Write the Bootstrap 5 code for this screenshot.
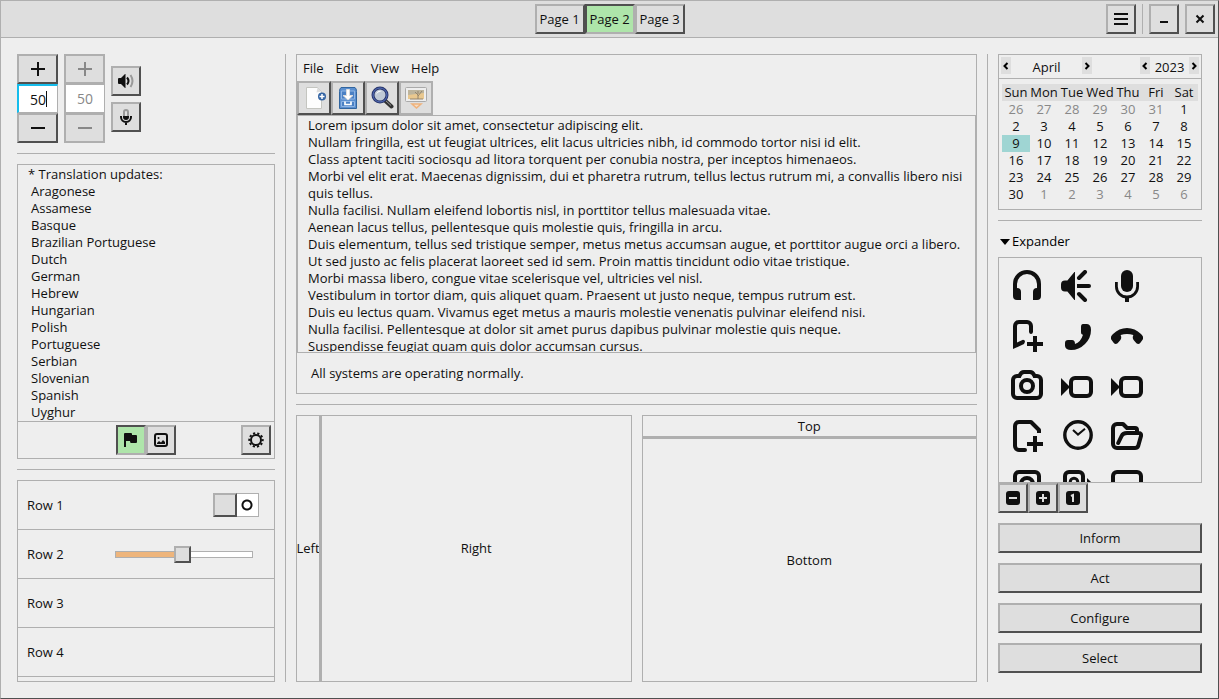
<!DOCTYPE html>
<html lang="en">
<head>
<meta charset="utf-8">
<meta name="viewport" content="width=device-width, initial-scale=1">
<title>Page 2</title>
<link href="https://cdn.jsdelivr.net/npm/bootstrap@5.3.0/dist/css/bootstrap.min.css" rel="stylesheet">
<style>
:root { --lo:#afafaf; --hi:#505050; --face:#dedede; --win:#eee; --ink:#101010; --line:17px; }
body { font:13px/var(--line) "Open Sans","Noto Sans",sans-serif; color:var(--ink); background:var(--win); }
.window { border:1px solid; border-color:var(--lo) var(--hi) var(--hi) var(--lo); }
.titlebar { display:grid; grid-template-columns:1fr auto 1fr; align-items:center; padding:3px; background:var(--face); border-bottom:1px solid var(--lo); }
.title-tools { gap:6px; }
.btn { font-size:13px; line-height:var(--line); padding:0; color:var(--ink); background:var(--face); border:2px solid; border-color:var(--lo) var(--hi) var(--hi) var(--lo); border-radius:0; height:30px; display:inline-flex; align-items:center; justify-content:center; }
.btn.active { background:#aee5aa; color:var(--ink); border-color:var(--hi) var(--lo) var(--lo) var(--hi); }
.btn:disabled { background:var(--face); color:#888; border-color:var(--lo); opacity:1; }
.square { width:30px; }
.page-btn { width:50px; white-space:nowrap; }
.action { width:100%; flex:none; }
.rule-v { width:1px; background:var(--lo); align-self:stretch; flex:none; }
.rule-h { height:1px; background:var(--lo); flex:none; margin:0; border:0; opacity:1; }
.frame { border:1px solid var(--lo); }
.content-area { padding:16px; gap:10px; min-height:0; }
.side-left { width:258px; }
.side-right { width:204px; }
.middle { min-width:0; }
.stack { display:flex; flex-direction:column; gap:10px; min-height:0; }
.spin-group { gap:6px; }
.spin { width:41px; display:flex; flex-direction:column; }
.spin input { width:100%; height:29px; border:2px solid var(--lo); border-width:2px 1px 1px 2px; background:#fff; border-radius:0; text-align:center; padding:0; font-size:14px; outline:0; color:var(--ink); }
.spin input.current { border-color:#15bdec var(--lo) var(--lo) #15bdec; }
.spin input:disabled { color:#888; border-width:1px 1px 1px 2px; }
.caret-box { position:relative; display:flex; }
.caret-box::after { content:""; position:absolute; right:11px; top:7px; width:1px; height:16px; background:var(--ink); }
.updates { height:257px; overflow:hidden; border-bottom:1px solid var(--lo); padding:1px 10px 0; }
.updates li { padding-left:3px; }
.list-tools { display:grid; grid-template-columns:1fr auto 1fr; align-items:center; padding:3px; height:36px; }
.rows { overflow:hidden; flex:1; }
.rows li { height:49px; border-bottom:1px solid var(--lo); padding:0 15px 0 9px; display:flex; align-items:center; justify-content:space-between; }
.toggle { appearance:none; margin:0; width:46px; height:24px; border:1px solid var(--lo); background:radial-gradient(circle at 33px 11px,#fff 3px,var(--ink) 4px,var(--ink) 5px,#fff 6px); position:relative; }
.toggle::before { content:""; position:absolute; left:-1px; top:-1px; width:24px; height:24px; background:var(--face); border:2px solid; border-color:var(--lo) var(--hi) var(--hi) var(--lo); }
.slide { appearance:none; margin:0 6px 0 0; width:138px; height:17px; background:transparent; }
.slide::-webkit-slider-runnable-track { height:7px; border:1px solid var(--lo); background:linear-gradient(90deg,#eeb57c 49%,#fff 49%); }
.slide::-webkit-slider-thumb { appearance:none; width:17px; height:17px; margin-top:-6px; background:var(--face); border:2px solid; border-color:var(--lo) var(--hi) var(--hi) var(--lo); }
.menus { padding:5px 6px 4px; gap:12px; height:26px; }
.menus a { color:var(--ink); text-decoration:none; }
.tool { width:34px; height:34px; }
.editor { display:block; width:100%; height:238px; resize:none; overflow:hidden; border:1px solid var(--lo); background:transparent; padding:1px 8px 1px 10px; color:var(--ink); outline:0; line-height:var(--line); }
.status { height:40px; padding:12px 14px 0; }
.panes { gap:10px; }
.pane { flex:1 1 0; }
.pane-left { width:22px; }
.pane-v { border-left:3px solid var(--lo); }
.pane-h { border-bottom:3px solid var(--lo); height:23px; }
.center-text { display:flex; align-items:center; justify-content:center; }
.cal-head { display:flex; justify-content:space-between; height:24px; padding:2px; border-bottom:1px solid var(--lo); }
.cal-nav { display:flex; justify-content:space-between; }
.cal-nav button { width:10px; height:17px; padding:0; border:0; background:var(--face); display:flex; align-items:center; justify-content:center; }
.cal-nav span { padding-top:2px; }
.month { width:91px; } .year { width:59px; }
.days { width:196px; margin:5px 3px 6px; table-layout:fixed; border-collapse:collapse; text-align:center; }
.days th { font-weight:400; background:var(--face); padding:0; height:17px; white-space:nowrap; text-align:center; }
.days td { padding:0; height:17px; }
.days .dim { color:#888; }
.days .today { background:#9fd5d3; }
.expander { border:0; background:none; padding:0 2px; text-align:left; display:flex; align-items:center; gap:2px; height:21px; margin-bottom:5px; }
.gallery { height:226px; overflow:hidden; padding:12px; display:grid; grid-template-columns:repeat(3,32px); grid-auto-rows:32px; gap:18px; }
svg { display:block; flex:none; }
.ln { fill:none; stroke:currentColor; stroke-width:2; }
</style>
</head>
<body>
<div class="window vh-100 d-flex flex-column overflow-hidden">
<header class="titlebar">
  <span></span>
  <nav class="d-flex" aria-label="Pages">
    <button class="btn page-btn">Page 1</button><button class="btn page-btn active">Page 2</button><button class="btn page-btn">Page 3</button>
  </nav>
  <div class="title-tools d-flex justify-content-end">
    <button class="btn square" aria-label="Menu"><svg width="16" height="16"><path fill="currentColor" d="M1 2h14v2H1zM1 7h14v2H1zM1 12h14v2H1z"/></svg></button>
    <span class="rule-v"></span>
    <button class="btn square" aria-label="Minimize"><svg width="16" height="16"><path fill="currentColor" d="M4 10h8v2H4z"/></svg></button>
    <button class="btn square" aria-label="Close"><svg width="16" height="16"><path class="ln" d="M4.500 4.500l7 7M11.500 4.500l-7 7"/></svg></button>
  </div>
</header>

<main class="content-area d-flex flex-grow-1">
<section class="side-left stack flex-shrink-0">
  <div class="spin-group d-flex align-items-center">
    <div class="spin">
      <button class="btn" aria-label="Increase"><svg width="16" height="16"><path class="ln" d="M1 8h14M8 1v14"/></svg></button>
      <div class="caret-box"><input class="current" value="50" aria-label="Amount"></div>
      <button class="btn" aria-label="Decrease"><svg width="16" height="16"><path class="ln" d="M1 8h14"/></svg></button>
    </div>
    <div class="spin">
      <button class="btn" disabled aria-label="Increase"><svg width="16" height="16"><path class="ln" d="M1 8h14M8 1v14"/></svg></button>
      <input value="50" disabled aria-label="Fixed amount">
      <button class="btn" disabled aria-label="Decrease"><svg width="16" height="16"><path class="ln" d="M1 8h14"/></svg></button>
    </div>
    <div class="spin-group d-flex flex-column">
      <button class="btn square" aria-label="Volume"><svg width="16" height="16"><path fill="currentColor" d="M0 6q0-1 1-1h2l4-4h.5v14H7l-4-4H1q-1 0-1-1z"/><path class="ln" d="M9 4.500q3 3.500 0 7"/><path class="ln" style="stroke:#999" d="M12.500 2q4 6 0 12"/></svg></button>
      <button class="btn square" aria-label="Microphone"><svg width="16" height="16"><path fill="#999" d="M5 8V3a3 3 0 0 1 6 0v5H9V3a1 1 0 0 0-2 0v5z"/><path fill="currentColor" d="M5 7h6v1a3 3 0 0 1-6 0z"/><path class="ln" d="M3 7v1a5 5 0 0 0 10 0V7M8 13v3"/></svg></button>
    </div>
  </div>
  <hr class="rule-h">
  <div class="frame">
    <div class="updates">
      <div>* Translation updates:</div>
      <ul class="list-unstyled m-0"><li>Aragonese</li><li>Assamese</li><li>Basque</li><li>Brazilian Portuguese</li><li>Dutch</li><li>German</li><li>Hebrew</li><li>Hungarian</li><li>Polish</li><li>Portuguese</li><li>Serbian</li><li>Slovenian</li><li>Spanish</li><li>Uyghur</li></ul>
    </div>
    <div class="list-tools">
      <span></span>
      <div class="d-flex"><button class="btn square active" aria-label="Flag"><svg width="16" height="16"><path fill="currentColor" d="M1 2q0-1 1-1h6q1 0 1 1v1h4q1 0 1 1v6q0 1-1 1H8q-1 0-1-2H3v6H1z"/></svg></button><button class="btn square" aria-label="Image"><svg width="16" height="16"><rect class="ln" x="2" y="2" width="12" height="12" rx="2"/><path fill="currentColor" d="M4 12v-1l2-2 2 1.500L10 8l2 2v2z"/><circle cx="5.500" cy="6" r="1" fill="currentColor"/></svg></button></div>
      <button class="btn square ms-auto" aria-label="Settings"><svg width="16" height="16"><circle class="ln" cx="8" cy="8" r="5"/><circle cx="8" cy="8" r="6.700" fill="none" stroke="currentColor" stroke-width="2" stroke-dasharray="2.200 2.010" stroke-dashoffset="1.100"/></svg></button>
    </div>
  </div>
  <hr class="rule-h">
  <ul class="rows frame list-unstyled m-0">
    <li><label for="sw">Row 1</label><input id="sw" class="toggle" type="checkbox" role="switch"></li>
    <li><label for="sl">Row 2</label><input id="sl" class="slide" type="range" value="49"></li>
    <li>Row 3</li><li>Row 4</li><li></li>
  </ul>
</section>
<span class="rule-v"></span>

<section class="middle stack flex-grow-1">
  <div class="frame">
    <nav class="menus d-flex" aria-label="Menu bar"><a href="#">File</a><a href="#">Edit</a><a href="#">View</a><a href="#">Help</a></nav>
    <div class="d-flex">
      <button class="btn tool" aria-label="New"><svg width="24" height="24"><path d="M4.500 1.500h11l4 4v17h-15z" fill="#fdfdfd" stroke="#c4c5c0"/><path d="M15.500 1.500l-1 5 5-1z" fill="#ddd"/><circle cx="20" cy="10.500" r="4" fill="#3465a4"/><path d="M17.500 10.500h5M20 8v5" stroke="#fff" stroke-width="1.500"/></svg></button>
      <button class="btn tool" aria-label="Save"><svg width="24" height="24"><path d="M5 1.500h14q1.500 1 1.500 4v17h-17v-17q0-3 1.500-4z" fill="#5b8fcf" stroke="#31659f"/><path d="M5.500 5h13v8h-13zM5.500 15.500h13v5h-13z" fill="#4a80c4" stroke="#8fb5e4"/><path d="M10.500 3.500h3v6h3.500L12 14 7 9.500h3.500z" fill="#fff" stroke="#ddd"/><path d="M9 15.500v3h6v-3" fill="none" stroke="#fff" stroke-width="1.700"/></svg></button>
      <button class="btn tool" aria-label="Find"><svg width="24" height="24"><path d="M15.500 15l6 5.500" stroke="#333" stroke-width="4" stroke-linecap="round"/><path d="M15 14l6 5.500" stroke="#999"/><circle cx="10" cy="9" r="7" fill="#bfc9d6" stroke="#28356a" stroke-width="3"/><circle cx="10" cy="9" r="7" fill="none" stroke="#5570bd"/><path d="M6 9q1-5 6-4-5 1-6 4" fill="#fff"/></svg></button>
      <button class="btn tool" disabled aria-label="Picture"><svg width="24" height="24"><rect x="1.500" y="1.500" width="21" height="14" rx="1" fill="#eee" stroke="#aaa"/><path d="M4 4h16v9H4z" fill="#e9c88f"/><path d="M4 4h16v3L4 9z" fill="#bdb49c"/><path d="M14 13V9l-3-3M14 10l4-5M14 8V5M6 13h13" fill="none" stroke="#93846c"/><path d="M8 18h9l-4.500 4z" fill="#f4dcc4" stroke="#efb27c" stroke-width="1.500"/></svg></button>
    </div>
    <textarea class="editor" aria-label="Document" spellcheck="false">Lorem ipsum dolor sit amet, consectetur adipiscing elit.
Nullam fringilla, est ut feugiat ultrices, elit lacus ultricies nibh, id commodo tortor nisi id elit.
Class aptent taciti sociosqu ad litora torquent per conubia nostra, per inceptos himenaeos.
Morbi vel elit erat. Maecenas dignissim, dui et pharetra rutrum, tellus lectus rutrum mi, a convallis libero nisi quis tellus.
Nulla facilisi. Nullam eleifend lobortis nisl, in porttitor tellus malesuada vitae.
Aenean lacus tellus, pellentesque quis molestie quis, fringilla in arcu.
Duis elementum, tellus sed tristique semper, metus metus accumsan augue, et porttitor augue orci a libero.
Ut sed justo ac felis placerat laoreet sed id sem. Proin mattis tincidunt odio vitae tristique.
Morbi massa libero, congue vitae scelerisque vel, ultricies vel nisl.
Vestibulum in tortor diam, quis aliquet quam. Praesent ut justo neque, tempus rutrum est.
Duis eu lectus quam. Vivamus eget metus a mauris molestie venenatis pulvinar eleifend nisi.
Nulla facilisi. Pellentesque at dolor sit amet purus dapibus pulvinar molestie quis neque.
Suspendisse feugiat quam quis dolor accumsan cursus.</textarea>
    <div class="status">All systems are operating normally.</div>
  </div>
  <hr class="rule-h">
  <div class="panes d-flex flex-grow-1">
    <div class="pane frame d-flex">
      <div class="pane-left center-text">Left</div>
      <div class="pane-v center-text flex-grow-1">Right</div>
    </div>
    <div class="pane frame d-flex flex-column">
      <div class="pane-h center-text">Top</div>
      <div class="center-text flex-grow-1">Bottom</div>
    </div>
  </div>
</section>
<span class="rule-v"></span>

<section class="side-right stack flex-shrink-0">
  <div class="frame">
    <div class="cal-head">
      <div class="cal-nav month"><button aria-label="Previous month"><svg width="8" height="8"><path class="ln" d="M5.500 1l-3 3 3 3"/></svg></button><span>April</span><button aria-label="Next month"><svg width="8" height="8"><path class="ln" d="M2.500 1l3 3-3 3"/></svg></button></div>
      <div class="cal-nav year"><button aria-label="Previous year"><svg width="8" height="8"><path class="ln" d="M5.500 1l-3 3 3 3"/></svg></button><span>2023</span><button aria-label="Next year"><svg width="8" height="8"><path class="ln" d="M2.500 1l3 3-3 3"/></svg></button></div>
    </div>
    <table class="days">
      <thead><tr><th>Sun</th><th>Mon</th><th>Tue</th><th>Wed</th><th>Thu</th><th>Fri</th><th>Sat</th></tr></thead>
      <tbody>
      <tr><td class="dim">26</td><td class="dim">27</td><td class="dim">28</td><td class="dim">29</td><td class="dim">30</td><td class="dim">31</td><td>1</td></tr>
      <tr><td>2</td><td>3</td><td>4</td><td>5</td><td>6</td><td>7</td><td>8</td></tr>
      <tr><td class="today">9</td><td>10</td><td>11</td><td>12</td><td>13</td><td>14</td><td>15</td></tr>
      <tr><td>16</td><td>17</td><td>18</td><td>19</td><td>20</td><td>21</td><td>22</td></tr>
      <tr><td>23</td><td>24</td><td>25</td><td>26</td><td>27</td><td>28</td><td>29</td></tr>
      <tr><td>30</td><td class="dim">1</td><td class="dim">2</td><td class="dim">3</td><td class="dim">4</td><td class="dim">5</td><td class="dim">6</td></tr>
      </tbody>
    </table>
  </div>
  <hr class="rule-h">
  <div>
    <button class="expander" aria-expanded="true"><svg width="10" height="6"><path d="M0 0h10L5 6z" fill="currentColor"/></svg>Expander</button>
    <div class="gallery frame">
      <svg viewBox="0 0 16 16"><path class="ln" d="M2 12V7a6 6 0 0 1 12 0v5"/><path fill="currentColor" d="M1 9h2a2 2 0 0 1 2 2v4H3a2 2 0 0 1-2-2zM15 9h-2a2 2 0 0 0-2 2v4h2a2 2 0 0 0 2-2z"/></svg>
      <svg viewBox="0 0 16 16"><path fill="currentColor" d="M2 5.200h1.200L6.700 1H7v14h-.3l-3.500-4.200H2a2 2 0 0 1-2-2V7.200a2 2 0 0 1 2-2z"/><path class="ln" stroke-linecap="round" d="M9 4l3-3M9 8h5M9 12l3 3"/><path class="ln" d="M8 8h3"/></svg>
      <svg viewBox="0 0 16 16"><rect x="5" y="0" width="6" height="11" rx="3" fill="currentColor"/><path class="ln" style="stroke-width:1.400" d="M2.700 6v2.200a5.300 5.300 0 0 0 10.600 0V6"/><path class="ln" d="M8 13v3"/></svg>
      <svg viewBox="0 0 16 16"><path fill="currentColor" d="M1 14.500V3a3 3 0 0 1 3-3h4a3 3 0 0 1 3 3v3q-.2 1-1 1T9 6V3a1 1 0 0 0-1-1H4a1 1 0 0 0-1 1v8.300l3-1.400q1 0 1 1L6.500 12z"/><path class="ln" d="M8 12h8M12 8v8"/></svg>
      <svg viewBox="0 0 16 16"><path fill="currentColor" d="M11 2h2q2 .3 2 3 0 4-3 7t-7 3q-2.700 0-3-2v-1.500Q2 10 3.500 10h2Q7 10 7 12q2.800-.8 4-4.600-1 0-1-1.400V3.500Q10 2 11 2z"/></svg>
      <svg viewBox="0 0 16 16"><path fill="currentColor" d="M1 7q3-3 7-3t7 3q1.700 1.500.7 3l-1.200 1.600q-.8.700-1.800 0L11.300 10q-.8-1-.1-2.500-3.200-1.100-6.400 0Q5.500 9 4.700 10l-1.400 1.600q-1 .7-1.800 0L.3 10Q-.7 8.500 1 7z"/></svg>
      <svg viewBox="0 0 16 16"><path class="ln" d="M3 3h1.200Q5 1 6.500 1h3q1.500 0 2.300 2H13a2 2 0 0 1 2 2v7a2 2 0 0 1-2 2H3a2 2 0 0 1-2-2V5a2 2 0 0 1 2-2z"/><circle class="ln" cx="8" cy="8" r="3"/></svg>
      <svg viewBox="0 0 16 16"><path fill="currentColor" d="M0 4l4.500 4.500L0 13z"/><rect class="ln" x="5" y="4" width="10" height="9" rx="2"/></svg>
      <svg viewBox="0 0 16 16"><path fill="currentColor" d="M0 4l4.500 4.500L0 13z"/><rect class="ln" x="5" y="4" width="10" height="9" rx="2"/></svg>
      <svg viewBox="0 0 16 16"><path class="ln" stroke-linejoin="round" d="M7 15H4a2 2 0 0 1-2-2V3a2 2 0 0 1 2-2h6l4 4v1.500"/><circle cx="7" cy="15" r="1" fill="currentColor"/><path class="ln" d="M8 12h8M12 8v8"/></svg>
      <svg viewBox="0 0 16 16"><circle class="ln" style="stroke-width:1.700" cx="8.500" cy="7.500" r="6.600"/><path class="ln" style="stroke-width:1" d="M6 5l2.500 2.300L12 4.400"/></svg>
      <svg viewBox="0 0 16 16"><path class="ln" stroke-linejoin="round" d="M13 6V5q0-1-1-1H8L6 2H3a2 2 0 0 0-2 2v8a2 2 0 0 0 2 2h9q1.200 0 1.600-1l1.400-5q.2-1.500-1-1.500H8q-2 0-2.700 1.500L3.600 11.500" stroke-linecap="round"/></svg>
      <svg viewBox="0 0 16 16"><rect class="ln" x="2" y="1" width="12" height="14" rx="2"/><circle class="ln" cx="8" cy="7" r="3"/></svg>
      <svg viewBox="0 0 16 16"><rect class="ln" x="2" y="1" width="9" height="14" rx="2"/><circle class="ln" style="stroke-width:1.500" cx="6.500" cy="6" r="1.900"/><path fill="currentColor" d="M13 4l3 3v6h-3z"/></svg>
      <svg viewBox="0 0 16 16"><rect class="ln" x="1" y="1" width="14" height="10" rx="2"/></svg>
    </div>
    <div class="d-flex">
      <button class="btn square" aria-label="Zoom out"><svg width="16" height="16"><rect x="1" y="1" width="14" height="14" rx="3" fill="currentColor"/><path d="M4 8h8" stroke="#dedede" stroke-width="2"/></svg></button>
      <button class="btn square" aria-label="Zoom in"><svg width="16" height="16"><rect x="1" y="1" width="14" height="14" rx="3" fill="currentColor"/><path d="M4 8h8M8 4v8" stroke="#dedede" stroke-width="2"/></svg></button>
      <button class="btn square" aria-label="Original size"><svg width="16" height="16"><rect x="1" y="1" width="14" height="14" rx="3" fill="currentColor"/><path d="M6 6l2-1v7" fill="none" stroke="#dedede" stroke-width="2"/></svg></button>
    </div>
  </div>
  <button class="btn action">Inform</button>
  <button class="btn action">Act</button>
  <button class="btn action">Configure</button>
  <button class="btn action">Select</button>
</section>
</main>
</div>
<script src="https://cdn.jsdelivr.net/npm/bootstrap@5.3.0/dist/js/bootstrap.bundle.min.js"></script>
</body>
</html>
